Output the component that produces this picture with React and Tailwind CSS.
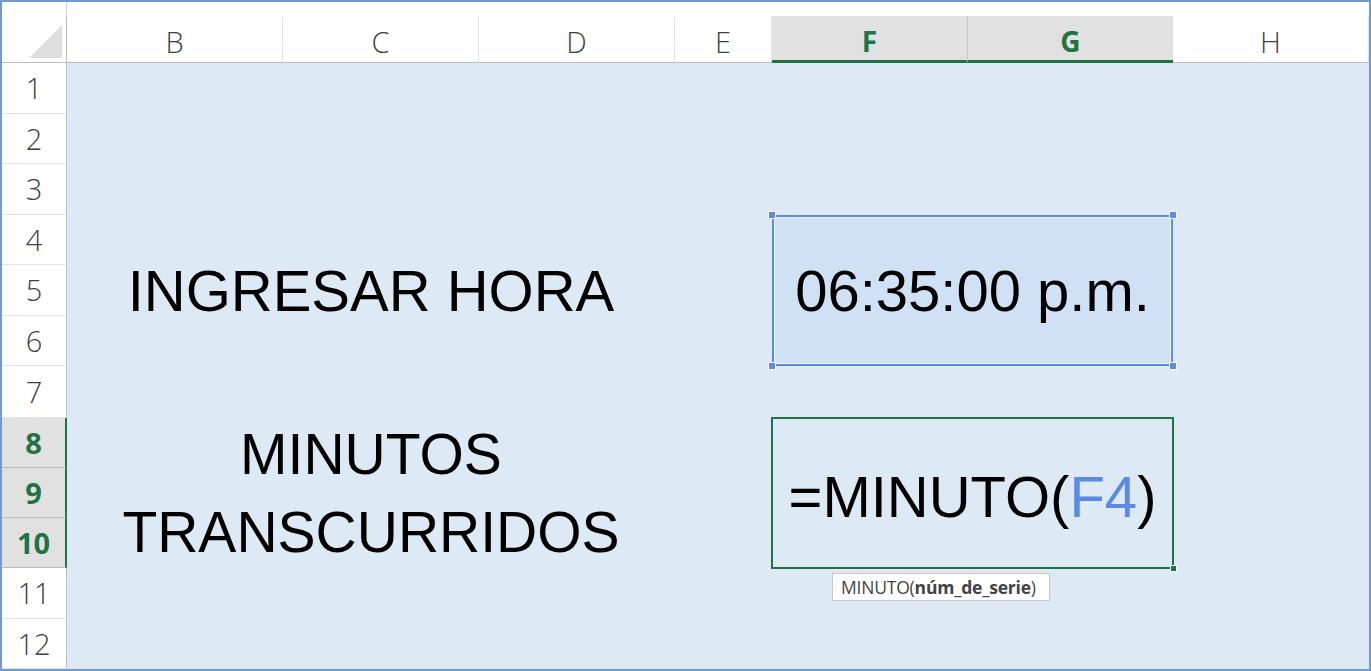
import React from 'react';

const columns = [
  { name: 'B' },
  { name: 'C' },
  { name: 'D' },
  { name: 'E' },
  { name: 'F', active: true },
  { name: 'G', active: true },
  { name: 'H' },
];

const rows = [1, 2, 3, 4, 5, 6, 7, 8, 9, 10, 11, 12];
const activeRows = [8, 9, 10];

const headerFont = { fontFamily: '"Open Sans", "Noto Sans", sans-serif' };
const cellFont = { fontFamily: '"Liberation Sans", Arial, sans-serif' };

const App = () => {
  return (
    <div className="w-[1371px] h-[671px] bg-white border-2 border-[#6f9cca] overflow-hidden">
      {/* strip above the headers */}
      <div className="h-[14px] flex">
        <div className="w-[65px] border-r border-[#d6d6d6]"></div>
      </div>

      <div
        className="grid grid-cols-[65px_216px_196px_196px_97px_196px_205px_196px] grid-rows-[47px_51px_50px_51px_50px_51px_50px_52px_50px_50px_50px_51px_50px]"
        style={headerFont}
      >
        {/* Corner */}
        <div className="col-start-1 row-start-1 border-r border-b border-[#bdbdbd] flex items-end justify-end pr-[4px] pb-[4px]">
          <svg width="33" height="33" viewBox="0 0 33 33">
            <polygon points="33,0 33,33 0,33" fill="#dfdfdf" />
          </svg>
        </div>

        {/* Column headers */}
        {columns.map((col, i) =>
          col.active ? (
            <div
              key={col.name}
              className={`row-start-1 bg-[#e1e1e1] border-b-[3px] border-b-[#217346] flex items-center justify-center pt-[5px] text-[28px] font-bold text-[#217346] ${col.name === 'F' ? 'border-r border-r-[#c8c8c8]' : ''}`}
              style={{ gridColumnStart: i + 2 }}
            >
              {col.name}
            </div>
          ) : (
            <div
              key={col.name}
              className="row-start-1 border-b border-b-[#bdbdbd] border-r border-r-[#e3e3e3] flex items-center justify-center pt-[6px] text-[29px] font-light text-[#3f3f3f]"
              style={{ gridColumnStart: i + 2 }}
            >
              {col.name}
            </div>
          )
        )}

        {/* Row headers */}
        {rows.map((r) => {
          const active = activeRows.includes(r);
          return (
            <div
              key={r}
              className={`col-start-1 flex items-center justify-center text-[29px] ${
                active
                  ? 'bg-[#e1e1e1] border-r-2 border-r-[#217346] border-b border-b-[#bdbdbd] font-bold text-[#217346]'
                  : 'border-r border-r-[#bdbdbd] border-b border-b-[#e3e3e3] font-light text-[#3f3f3f]'
              }`}
              style={{ gridRowStart: r + 1 }}
            >
              {r}
            </div>
          );
        })}

        {/* Sheet background */}
        <div className="col-start-2 col-end-9 row-start-2 row-end-14 bg-[#dde9f5]"></div>

        {/* B4:D6 */}
        <div
          className="col-start-2 col-end-5 row-start-5 row-end-8 flex items-center justify-center text-[58px] text-black"
          style={cellFont}
        >
          INGRESAR HORA
        </div>

        {/* F4:G6 selected */}
        <div className="col-start-6 col-end-8 row-start-5 row-end-8 relative bg-[#d0e1f5] flex items-center justify-center">
          <span className="text-[58px] text-black" style={cellFont}>
            06:35:00 p.m.
          </span>
          <div className="absolute inset-0 border-2 border-[#5b8be2] shadow-[inset_0_0_0_1px_rgba(255,255,255,0.7)]"></div>
          <div className="absolute -left-[4px] -top-[4px] w-[8px] h-[8px] bg-[#5b8be2] border border-white"></div>
          <div className="absolute -right-[4px] -top-[4px] w-[8px] h-[8px] bg-[#5b8be2] border border-white"></div>
          <div className="absolute -left-[4px] -bottom-[4px] w-[8px] h-[8px] bg-[#5b8be2] border border-white"></div>
          <div className="absolute -right-[4px] -bottom-[4px] w-[8px] h-[8px] bg-[#5b8be2] border border-white"></div>
        </div>

        {/* B8:D10 */}
        <div
          className="col-start-2 col-end-5 row-start-9 row-end-12 flex items-center justify-center text-center text-[57px] leading-[78px] text-black"
          style={cellFont}
        >
          MINUTOS
          <br />
          TRANSCURRIDOS
        </div>

        {/* F8:G10 active cell */}
        <div className="col-start-6 col-end-8 row-start-9 row-end-12 relative flex items-center justify-center">
          <span className="text-[58px] text-black pt-[6px]" style={cellFont}>
            =MINUTO(<span className="text-[#5b8ae6]">F4</span>)
          </span>
          <div className="absolute -inset-[1px] border-2 border-[#217346]"></div>
          <div className="absolute -right-[4px] -bottom-[4px] w-[7px] h-[7px] bg-[#217346] border border-white"></div>

          {/* Function tooltip */}
          <div className="absolute left-[60px] top-[calc(100%+5px)] h-[28px] w-[218px] bg-white border border-[#c6c6c6] flex items-center pl-[8px] text-[17.5px] tracking-[-0.2px] text-[#444] whitespace-nowrap">
            MINUTO(<span className="font-bold">núm_de_serie</span>)
          </div>
        </div>
      </div>
    </div>
  );
};

export default App;
